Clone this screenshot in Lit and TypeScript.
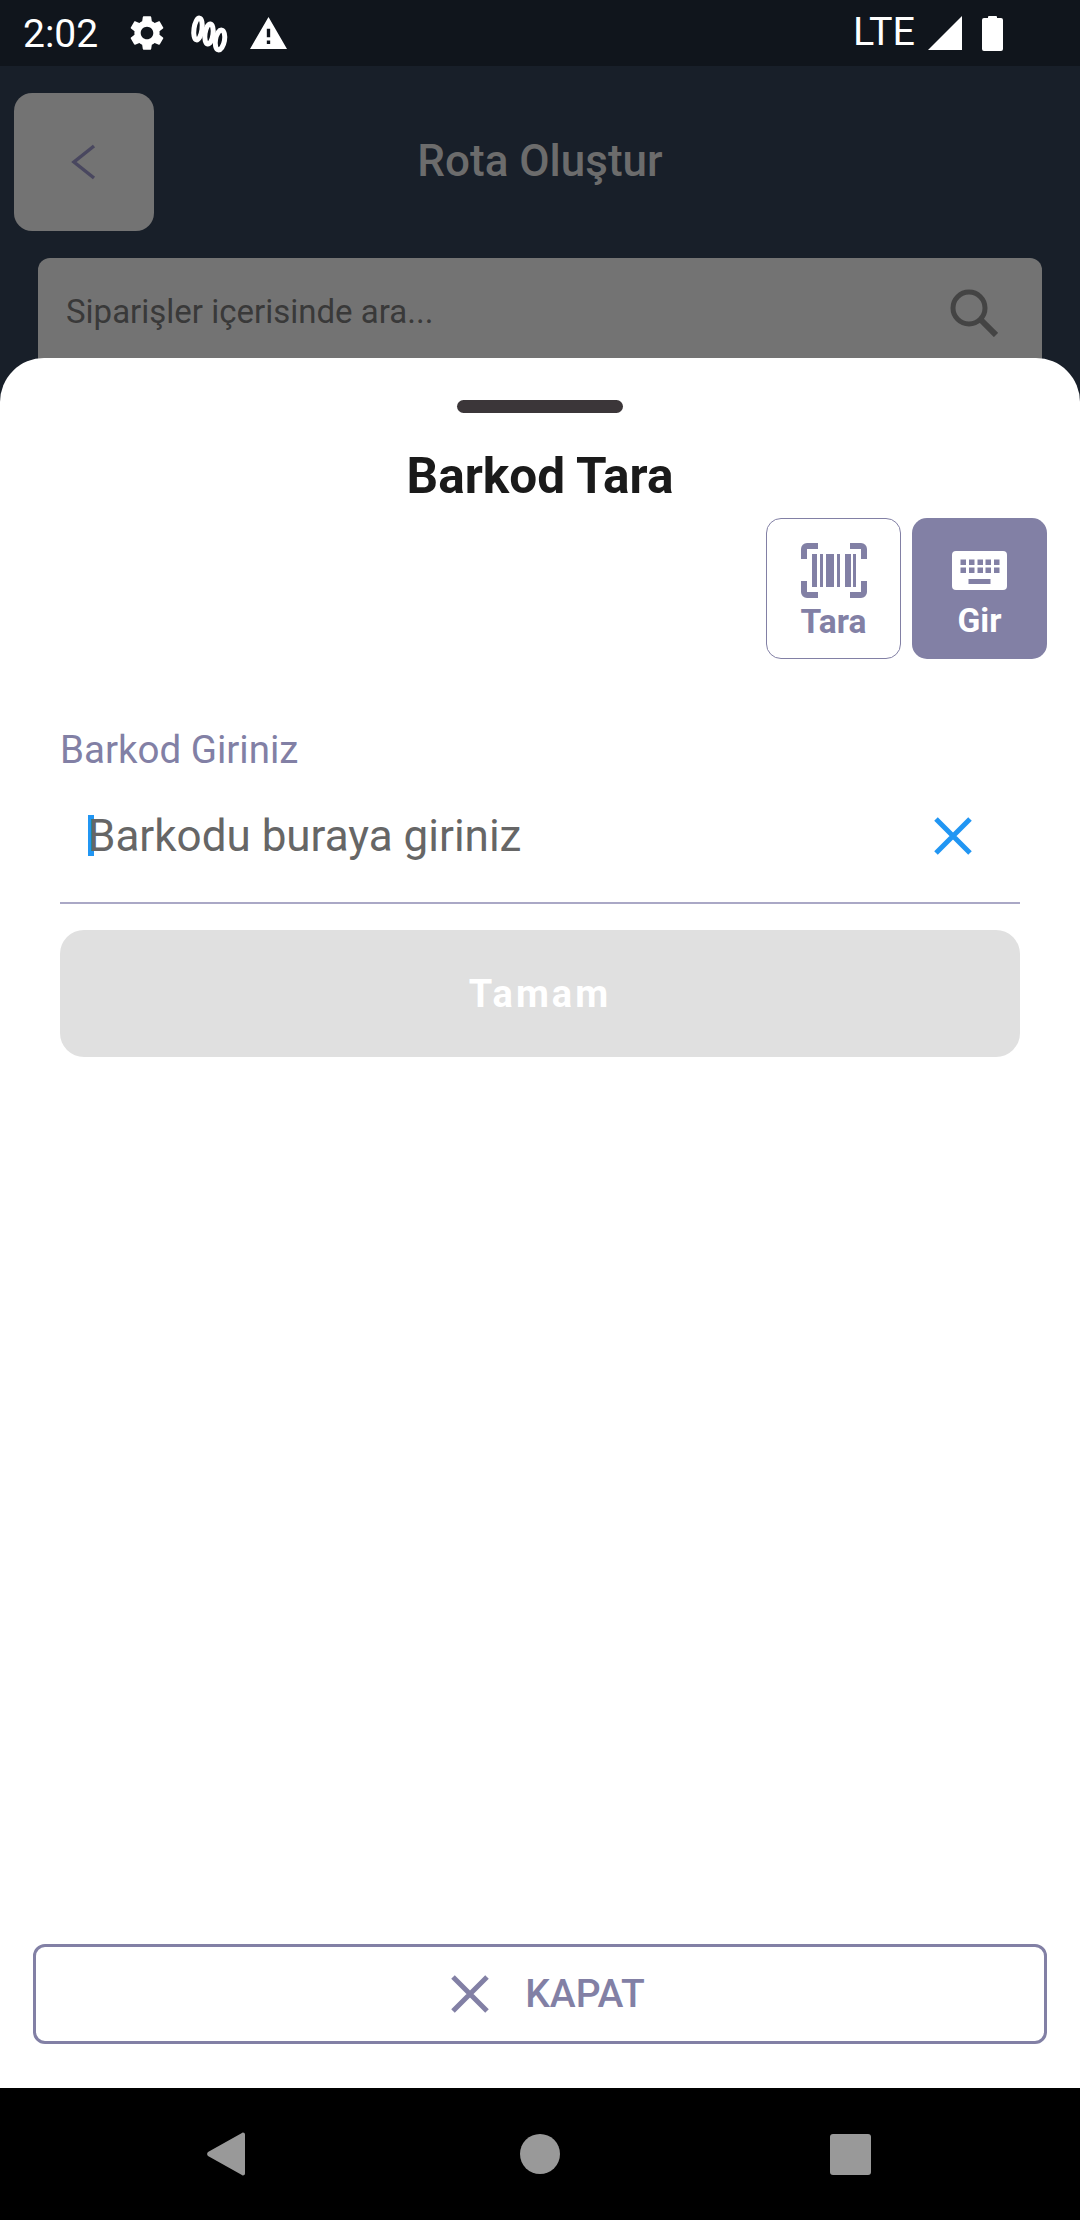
import { LitElement, html, css, svg } from 'lit';
import { customElement } from 'lit/decorators.js';

const BARCODE_BARS = [[11, 5], [19, 3], [25, 8], [36, 3], [44, 6], [52, 3]];
const KEY_XS = [8.5, 17, 25.5, 33.5, 42];

@customElement('app-root')
export class AppRoot extends LitElement {
  static styles = css`
    :host {
      display: block;
      width: 1080px;
      height: 2220px;
      font-family: Roboto, 'Liberation Sans', sans-serif;
    }
    svg {
      display: block;
      flex: none;
    }
    .screen {
      height: 2220px;
      display: flex;
      flex-direction: column;
      background: #181f29;
      overflow: hidden;
    }

    /* status bar */
    .status {
      height: 66px;
      flex: none;
      background: #10151c;
      color: #fff;
      display: flex;
      align-items: center;
      padding: 0 77px 0 23px;
    }
    .time {
      font-size: 39px;
      line-height: 66px;
      margin-right: 28px;
      margin-top: 2px;
    }
    .status-icons {
      display: flex;
      align-items: center;
      gap: 22px;
    }
    .status-right {
      margin-left: auto;
      display: flex;
      align-items: center;
    }
    .lte {
      font-size: 39.5px;
      line-height: 66px;
      margin-right: 13px;
      margin-top: -2px;
    }
    .battery {
      margin-left: 20px;
    }

    /* dimmed page under the sheet */
    .body {
      flex: 1;
      position: relative;
      overflow: hidden;
    }
    .header {
      display: grid;
      grid-template-columns: 1fr auto 1fr;
      align-items: center;
      padding: 27px 0 0 14px;
    }
    .back {
      width: 140px;
      height: 138px;
      border-radius: 18px;
      background: #737373;
      display: flex;
      align-items: center;
      justify-content: center;
    }
    .page-title {
      font-size: 44px;
      font-weight: 500;
      line-height: 52px;
      color: #6c6c6c;
      padding: 0 14px 2px 0;
    }
    .search {
      margin: 27px 38px 0;
      height: 140px;
      border-radius: 12px;
      background: #737373;
      display: flex;
      align-items: flex-start;
      justify-content: space-between;
      padding: 31px 44px 0 28px;
      box-sizing: border-box;
      font-size: 33px;
      line-height: 46px;
      color: #393939;
    }

    /* bottom sheet */
    .sheet {
      position: absolute;
      inset: 292px 0 0 0;
      background: #fff;
      border-radius: 44px 44px 0 0;
      display: flex;
      flex-direction: column;
    }
    .handle {
      width: 166px;
      height: 13px;
      border-radius: 7px;
      background: #3b3639;
      margin: 42px auto 0;
    }
    .sheet-title {
      text-align: center;
      font-size: 49.5px;
      font-weight: 700;
      line-height: 54px;
      color: #1a1a1a;
      margin-top: 36px;
    }
    .tabs {
      display: flex;
      justify-content: flex-end;
      gap: 11px;
      padding-right: 33px;
      margin-top: 15px;
    }
    .tab {
      width: 135px;
      height: 141px;
      box-sizing: border-box;
      border-radius: 15px;
      display: flex;
      flex-direction: column;
      align-items: center;
      font-size: 33.5px;
      font-weight: 700;
      line-height: 36px;
    }
    .tab.outline {
      border: 1.5px solid #8280a5;
      color: #8280a5;
      padding-top: 24px;
    }
    .tab.filled {
      background: #8280a5;
      color: #fff;
      padding-top: 33px;
    }
    .tab.outline span {
      margin-top: 6px;
    }
    .tab.filled span {
      margin-top: 13px;
    }
    .form {
      padding: 0 60px;
      margin-top: 70px;
    }
    .label {
      font-size: 38.5px;
      line-height: 42px;
      color: #8280a5;
    }
    .field {
      height: 131px;
      box-sizing: border-box;
      display: flex;
      align-items: center;
      justify-content: space-between;
      padding: 0 48px 4px 28px;
      margin-top: 2px;
      border-bottom: 2px solid #aaa8c6;
    }
    .entry {
      display: flex;
      align-items: center;
      font-size: 44px;
      line-height: 52px;
      color: #666;
    }
    .caret {
      width: 6px;
      height: 41px;
      background: #2196f3;
      margin-right: -6px;
    }
    .ok {
      height: 127px;
      margin-top: 26px;
      border-radius: 24px;
      background: #e0e0e0;
      color: #fff;
      font-size: 38px;
      font-weight: 700;
      letter-spacing: 3px;
      display: flex;
      align-items: center;
      justify-content: center;
    }
    .close {
      margin: auto 33px 44px;
      height: 100px;
      box-sizing: border-box;
      border: 3px solid #8280a5;
      border-radius: 12px;
      color: #8280a5;
      font-size: 39px;
      font-weight: 500;
      display: flex;
      align-items: center;
      justify-content: center;
      gap: 36px;
      padding-left: 16px;
    }

    /* navigation bar */
    .nav {
      height: 132px;
      flex: none;
      background: #000;
      display: flex;
      align-items: center;
      padding-left: 207px;
      box-sizing: border-box;
    }
    .nav-circle {
      width: 40px;
      height: 40px;
      border-radius: 50%;
      background: #999;
      margin-left: 275px;
    }
    .nav-square {
      width: 41px;
      height: 41px;
      border-radius: 3px;
      background: #999;
      margin-left: 270px;
    }
  `;

  private _cross(size: number, color: string, width: number) {
    return html`<svg width=${size} height=${size} viewBox="0 0 38 38">
      <path d="M2 2L36 36M36 2L2 36" stroke=${color} stroke-width=${width} fill="none" />
    </svg>`;
  }

  private _barcode() {
    return html`<svg width="66" height="55" viewBox="0 0 66 55" fill="#8280a5">
      <path d="M17 3H6a3 3 0 0 0-3 3V16M49 3H60a3 3 0 0 1 3 3V16M17 52H6a3 3 0 0 1-3-3V38M49 52H60a3 3 0 0 0 3-3V38"
        fill="none" stroke="#8280a5" stroke-width="6" />
      ${BARCODE_BARS.map(([x, w]) => svg`<rect x=${x} y="11" width=${w} height="33" />`)}
    </svg>`;
  }

  private _keyboard() {
    return html`<svg width="55" height="39" viewBox="0 0 55 39">
      <rect width="55" height="39" rx="4" fill="#fff" />
      ${KEY_XS.map((x) => svg`<rect x=${x} y="8.5" width="5.5" height="5.5" fill="#8280a5" />`)}
      ${KEY_XS.map((x) => svg`<rect x=${x} y="16.5" width="5.5" height="5.5" fill="#8280a5" />`)}
      <rect x="16.5" y="28" width="22" height="5" fill="#8280a5" />
    </svg>`;
  }

  render() {
    return html`
      <div class="screen">
        <div class="status">
          <span class="time">2:02</span>
          <div class="status-icons">
            <svg width="42" height="42" viewBox="0 0 24 24" fill="#fff">
              <path d="M19.14 12.94c.04-.3.06-.61.06-.94 0-.32-.02-.64-.07-.94l2.03-1.58c.18-.14.23-.41.12-.61l-1.92-3.32c-.12-.22-.37-.29-.59-.22l-2.39.96c-.5-.38-1.03-.7-1.62-.94l-.36-2.54c-.04-.24-.24-.41-.48-.41h-3.84c-.24 0-.43.17-.47.41l-.36 2.54c-.59.24-1.13.57-1.62.94l-2.39-.96c-.22-.08-.47 0-.59.22L2.74 8.87c-.12.21-.08.47.12.61l2.03 1.58c-.05.3-.09.63-.09.94s.02.64.07.94l-2.03 1.58c-.18.14-.23.41-.12.61l1.92 3.32c.12.22.37.29.59.22l2.39-.96c.5.38 1.03.7 1.62.94l.36 2.54c.05.24.24.41.48.41h3.84c.24 0 .44-.17.47-.41l.36-2.54c.59-.24 1.13-.56 1.62-.94l2.39.96c.22.08.47 0 .59-.22l1.92-3.32c.12-.22.07-.47-.12-.61l-2.01-1.58zM12 15.6c-1.98 0-3.6-1.62-3.6-3.6s1.62-3.6 3.6-3.6 3.6 1.62 3.6 3.6-1.62 3.6-3.6 3.6z" />
            </svg>
            <svg width="38" height="40" viewBox="0 0 38 40" fill="none" stroke="#fff" stroke-width="5">
              <ellipse cx="8" cy="16" rx="4" ry="11" transform="rotate(8 8 16)" />
              <ellipse cx="19" cy="21" rx="4" ry="10" transform="rotate(8 19 21)" />
              <ellipse cx="30" cy="27" rx="4.500" ry="10" transform="rotate(10 30 27)" />
            </svg>
            <svg width="37" height="34" viewBox="0 0 22 20" fill="#fff">
              <path d="M0 19.500h22L11 .5 0 19.500zm12-3h-2v-2h2v2zm0-4h-2v-5h2v5z" />
            </svg>
          </div>
          <div class="status-right">
            <span class="lte">LTE</span>
            <svg width="34" height="34" viewBox="0 0 34 34" fill="#fff"><path d="M0 34L34 0V34Z" /></svg>
            <svg class="battery" width="21" height="36" viewBox="0 0 21 36" fill="#fff">
              <path d="M6 2a1 1 0 0 1 1-1h7a1 1 0 0 1 1 1v1h4a2 2 0 0 1 2 2v29a2 2 0 0 1-2 2H2a2 2 0 0 1-2-2V5a2 2 0 0 1 2-2h4Z" />
            </svg>
          </div>
        </div>

        <div class="body">
          <div class="header">
            <div class="back">
              <svg width="26" height="36" viewBox="0 0 26 36" fill="none" stroke="#49475f" stroke-width="3.5">
                <path d="M23 2L3 18L23 34" />
              </svg>
            </div>
            <div class="page-title">Rota Oluştur</div>
          </div>
          <div class="search">
            <span>Siparişler içerisinde ara...</span>
            <svg width="48" height="48" viewBox="0 0 48 48" fill="none" stroke="#444" stroke-width="5">
              <circle cx="19" cy="19" r="16" />
              <path d="M31 31L46 46" stroke-width="6" />
            </svg>
          </div>

          <div class="sheet">
            <div class="handle"></div>
            <div class="sheet-title">Barkod Tara</div>
            <div class="tabs">
              <div class="tab outline">${this._barcode()}<span>Tara</span></div>
              <div class="tab filled">${this._keyboard()}<span>Gir</span></div>
            </div>
            <div class="form">
              <div class="label">Barkod Giriniz</div>
              <div class="field">
                <div class="entry"><i class="caret"></i>Barkodu buraya giriniz</div>
                ${this._cross(38, '#2196f3', 5)}
              </div>
              <div class="ok">Tamam</div>
            </div>
            <div class="close">${this._cross(38, '#8280a5', 5)}<span>KAPAT</span></div>
          </div>
        </div>

        <div class="nav">
          <svg width="38" height="44" viewBox="0 0 38 44" fill="#999">
            <path d="M36 0.500a2 2 0 0 1 2 2v39a2 2 0 0 1-3.500 1.300L1 24a3 3 0 0 1 0-4L34.500 1.200a2 2 0 0 1 1.500-.7Z" />
          </svg>
          <div class="nav-circle"></div>
          <div class="nav-square"></div>
        </div>
      </div>
    `;
  }
}
